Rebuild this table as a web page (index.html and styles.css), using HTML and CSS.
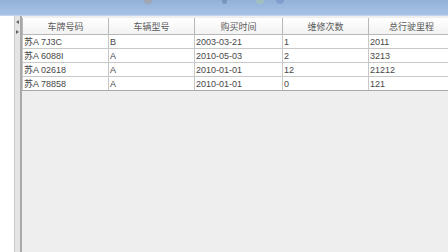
FILE: index.html
```html
<!DOCTYPE html>
<html>
<head>
<meta charset="utf-8">
<link rel="stylesheet" href="styles.css">
</head>
<body>
<div class="topbar">
  <span class="blob b1"></span>
  <span class="blob b2"></span>
  <span class="blob b3"></span>
  <span class="blob b4"></span>
</div>
<div class="main">
  <div class="leftpanel"></div>
  <div class="splitter">
    <span class="arrow left"></span>
    <span class="arrow right"></span>
  </div>
  <div class="content">
    <table class="grid">
      <colgroup>
        <col class="c1"><col class="c2"><col class="c3"><col class="c4"><col class="c5">
      </colgroup>
      <thead>
        <tr><th>车牌号码</th><th>车辆型号</th><th>购买时间</th><th>维修次数</th><th>总行驶里程</th></tr>
      </thead>
      <tbody>
        <tr><td>苏A 7J3C</td><td>B</td><td>2003-03-21</td><td>1</td><td>2011</td></tr>
        <tr><td>苏A 6088I</td><td>A</td><td>2010-05-03</td><td>2</td><td>3213</td></tr>
        <tr><td>苏A 02618</td><td>A</td><td>2010-01-01</td><td>12</td><td>21212</td></tr>
        <tr><td>苏A 78858</td><td>A</td><td>2010-01-01</td><td>0</td><td>121</td></tr>
      </tbody>
    </table>
  </div>
</div>
</body>
</html>
```

FILE: styles.css
```css
html, body {
  margin: 0;
  padding: 0;
  width: 448px;
  height: 252px;
  overflow: hidden;
  background: #eeeeee;
  font-family: "Liberation Sans", "Noto Sans CJK SC", sans-serif;
}
.topbar {
  position: relative;
  height: 15px;
  background: linear-gradient(#92b1d8, #a6c2e5);
  border-bottom: 1px solid #c4d6ee;
}
.blob {
  position: absolute;
  top: 0;
  width: 8px;
  height: 4px;
  border-radius: 0 0 4px 4px;
  opacity: 0.35;
}
.b1 { left: 144px; background: #b89070; }
.b2 { left: 222px; background: #40608c; width: 5px; }
.b3 { left: 256px; background: #b8d890; }
.b4 { left: 276px; background: #6070c0; }
.main {
  display: flex;
  height: 236px;
}
.leftpanel {
  width: 14px;
  background: #ffffff;
  border-right: 1px solid #c8c8c8;
}
.splitter {
  width: 5px;
  background: #e4e4e4;
  border-right: 2px solid #a8a8a8;
  display: flex;
  flex-direction: column;
  align-items: center;
  padding-top: 4px;
  gap: 6px;
}
.arrow {
  width: 0;
  height: 0;
  border-top: 2px solid transparent;
  border-bottom: 2px solid transparent;
}
.arrow.left { border-right: 3px solid #666; }
.arrow.right { border-left: 3px solid #666; }
.content {
  flex: 1;
  overflow: hidden;
  background: #eeeeee;
  padding-top: 2px;
}
.grid {
  border-collapse: collapse;
  table-layout: fixed;
  width: 432px;
  font-size: 9px;
  color: #484848;
}
.c1 { width: 86px; }
.c2 { width: 86px; }
.c3 { width: 88px; }
.c4 { width: 86px; }
.c5 { width: 86px; }
.grid th {
  height: 16px;
  padding: 0;
  font-weight: normal;
  text-align: center;
  background: linear-gradient(#ffffff, #f2f2f2);
  border: 1px solid #b8b8b8;
  border-top: none;
  color: #5a5a5a;
}
.grid td {
  height: 13px;
  padding: 0 0 0 1px;
  background: #ffffff;
  border: 1px solid #c8c8c8;
  white-space: nowrap;
  overflow: hidden;
}
.grid tbody tr:last-child td {
  border-bottom: 1px solid #a8a8a8;
}
```
